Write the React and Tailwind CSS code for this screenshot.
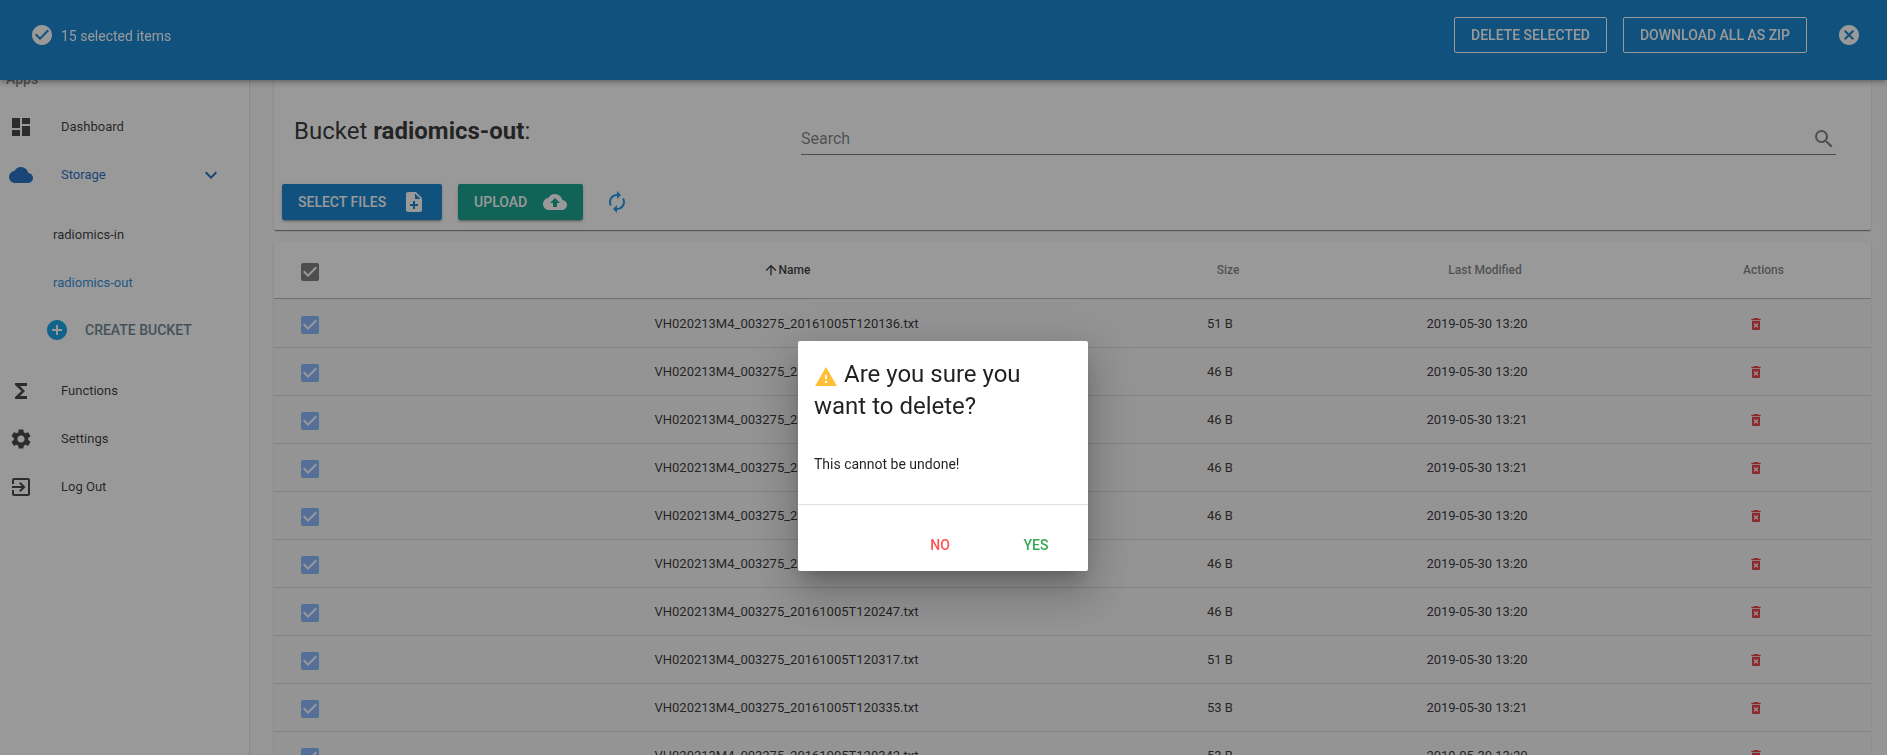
import React from "react";
import {
  MdAddCircle,
  MdArrowUpward,
  MdAutorenew,
  MdCancel,
  MdCheckCircle,
  MdCloud,
  MdCloudUpload,
  MdDashboard,
  MdExitToApp,
  MdExpandMore,
  MdFunctions,
  MdSearch,
  MdSettings,
} from "react-icons/md";

const files = [
  ["VH020213M4_003275_20161005T120136.txt", "51 B", "2019-05-30 13:20"],
  ["VH020213M4_003275_20161005T120148.txt", "46 B", "2019-05-30 13:20"],
  ["VH020213M4_003275_20161005T120159.txt", "46 B", "2019-05-30 13:21"],
  ["VH020213M4_003275_20161005T120211.txt", "46 B", "2019-05-30 13:21"],
  ["VH020213M4_003275_20161005T120223.txt", "46 B", "2019-05-30 13:20"],
  ["VH020213M4_003275_20161005T120235.txt", "46 B", "2019-05-30 13:20"],
  ["VH020213M4_003275_20161005T120247.txt", "46 B", "2019-05-30 13:20"],
  ["VH020213M4_003275_20161005T120317.txt", "51 B", "2019-05-30 13:20"],
  ["VH020213M4_003275_20161005T120335.txt", "53 B", "2019-05-30 13:21"],
  ["VH020213M4_003275_20161005T120342.txt", "53 B", "2019-05-30 13:20"],
];

function Glyph({ d, className }) {
  return (
    <svg viewBox="0 0 24 24" fill="currentColor" aria-hidden="true" className={className}>
      <path d={d} />
    </svg>
  );
}

const FILE_PLUS =
  "M13 9h5.5L13 3.5V9M6 2h8l6 6v12a2 2 0 0 1-2 2H6a2 2 0 0 1-2-2V4c0-1.11.89-2 2-2m5 9v3H8v2h3v3h2v-3h3v-2h-3v-3h-2Z";
const DELETE_FOREVER =
  "M6 19a2 2 0 0 0 2 2h8a2 2 0 0 0 2-2V7H6v12M8.46 11.88l1.41-1.41L12 12.59l2.12-2.12 1.41 1.41L13.41 14l2.12 2.12-1.41 1.41L12 15.41l-2.12 2.12-1.41-1.41L10.59 14l-2.13-2.12M15.5 4l-1-1h-5l-1 1H5v2h14V4h-3.5Z";
const ALERT = "M13 14h-2v-4h2m0 8h-2v-2h2M1 21h22L12 2 1 21Z";

function TickBox({ label, tone }) {
  return (
    <span className="grid size-[18px] place-items-center">
      <input
        type="checkbox"
        defaultChecked
        aria-label={label}
        className={`size-[18px] appearance-none rounded-xs [grid-area:1/1] ${tone}`}
      />
      <svg viewBox="0 0 18 18" fill="#fff" aria-hidden="true" className="pointer-events-none size-[18px] [grid-area:1/1]">
        <path d="M7 14L2 9l1.41-1.41L7 11.17l7.59-7.59L16 5 7 14Z" />
      </svg>
    </span>
  );
}

function NavItem({ icon, label, tone = "text-black/85", children }) {
  return (
    <a href="#" className={`flex h-12 items-center pr-[26px] pl-[9px] text-[13px] ${tone}`}>
      {icon}
      <span className="ml-7 flex-1">{label}</span>
      {children}
    </a>
  );
}

function HeaderCell({ children, active }) {
  return (
    <th className={`px-6 text-xs font-medium ${active ? "text-black/85" : "text-black/55"}`}>
      <span className="flex items-center justify-center">
        <MdArrowUpward className={active ? "size-4" : "invisible size-4"} />
        {children}
      </span>
    </th>
  );
}

function Sidebar() {
  return (
    <nav className="w-[250px] shrink-0 border-r border-black/12 bg-white pt-[55px]">
      <h2 className="flex h-12 items-center pl-1.5 text-sm font-medium text-black/55">Apps</h2>
      <NavItem icon={<MdDashboard className="size-6 text-[#37343a]" />} label="Dashboard" />
      <NavItem icon={<MdCloud className="size-6" />} label="Storage" tone="text-[#1565c0]">
        <MdExpandMore className="size-6" />
      </NavItem>
      <div className="flex flex-col pt-3 pb-3.5 text-[13px]">
        <a href="#" className="flex h-12 items-center pl-[53px] text-black/85">radiomics-in</a>
        <a href="#" className="flex h-12 items-center pl-[53px] text-[#1e88d8]">radiomics-out</a>
        <button className="flex h-[46px] items-center pl-[45px] text-sm font-medium text-[#607d8b]">
          <MdAddCircle className="mr-4 size-6 text-[#039be5]" />
          CREATE BUCKET
        </button>
      </div>
      <NavItem icon={<MdFunctions className="size-6 text-[#37343a]" />} label="Functions" />
      <NavItem icon={<MdSettings className="size-6 text-[#37343a]" />} label="Settings" />
      <NavItem icon={<MdExitToApp className="size-6 text-[#37343a]" />} label="Log Out" />
    </nav>
  );
}

function SelectionBar() {
  return (
    <header className="fixed inset-x-0 top-0 flex h-20 items-start bg-[#027bce] pr-[26px] pl-[30px] text-white shadow-[0_2px_4px_-1px_rgba(0,0,0,.2),0_4px_5px_rgba(0,0,0,.14),0_1px_10px_rgba(0,0,0,.12)]">
      <div className="flex flex-1 items-center pt-[23px] text-sm">
        <MdCheckCircle className="mr-[7px] size-6" />
        <span className="pt-0.5">15 selected items</span>
      </div>
      <div className="flex items-center gap-4 pt-[17px] text-sm font-medium">
        <button className="h-9 rounded-xs border border-white px-4">DELETE SELECTED</button>
        <button className="h-9 rounded-xs border border-white px-4">DOWNLOAD ALL AS ZIP</button>
        <button aria-label="Clear selection" className="ml-[14px]">
          <MdCancel className="size-6" />
        </button>
      </div>
    </header>
  );
}

function BucketCard() {
  const raised = "flex h-9 items-center rounded-xs px-4 shadow-[0_3px_1px_-2px_rgba(0,0,0,.2),0_2px_2px_rgba(0,0,0,.14),0_1px_5px_rgba(0,0,0,.12)]";
  return (
    <section className="rounded-xs bg-white px-2 pt-[115px] pb-2.5 shadow-[0_2px_1px_-1px_rgba(0,0,0,.4),0_1px_1px_rgba(0,0,0,.14),0_1px_3px_rgba(0,0,0,.12)]">
      <div className="flex items-start pr-[27px] pl-3">
        <h1 className="w-[507px] text-2xl leading-8">
          Bucket <strong className="font-bold">radiomics-out</strong>:
        </h1>
        <label className="mt-2 flex h-8 flex-1 items-center border-b border-black/55 text-black/55">
          <input
            type="text"
            placeholder="Search"
            aria-label="Search"
            className="min-w-0 flex-1 bg-transparent text-base outline-none placeholder:text-black/55"
          />
          <MdSearch className="size-6" />
        </label>
      </div>
      <div className="mt-[29px] flex items-center text-sm font-medium text-white">
        <button className={`${raised} bg-[#027bce]`}>
          SELECT FILES
          <Glyph d={FILE_PLUS} className="ml-4 size-6" />
        </button>
        <button className={`${raised} ml-4 bg-[#059a86]`}>
          UPLOAD
          <MdCloudUpload className="ml-4 size-6" />
        </button>
        <button aria-label="Refresh" className="ml-[22px]">
          <MdAutorenew className="size-6 text-[#0d93df]" />
        </button>
      </div>
    </section>
  );
}

function FileTable() {
  return (
    <section className="mt-3 rounded-xs bg-white shadow-[0_2px_1px_-1px_rgba(0,0,0,.2),0_1px_1px_rgba(0,0,0,.14),0_1px_3px_rgba(0,0,0,.12)]">
      <table className="w-full table-fixed border-collapse text-center text-[13px]">
        <colgroup>
          <col className="w-[173px]" />
          <col className="w-[679px]" />
          <col className="w-[188px]" />
          <col className="w-[326px]" />
          <col className="w-[231px]" />
        </colgroup>
        <thead>
          <tr className="h-14 border-b border-black/25">
            <th className="pt-1 pl-[27px]">
              <TickBox label="Select all files" tone="bg-[#757575]" />
            </th>
            <HeaderCell active>Name</HeaderCell>
            <HeaderCell>Size</HeaderCell>
            <HeaderCell>Last Modified</HeaderCell>
            <HeaderCell>Actions</HeaderCell>
          </tr>
        </thead>
        <tbody>
          {files.map(([name, size, modified]) => (
            <tr key={name} className="h-12 border-b border-black/12 bg-[#f5f5f5] first:h-[49px]">
              <td className="pt-1 pl-[27px]">
                <TickBox label={`Select ${name}`} tone="bg-[#82b1ff]" />
              </td>
              <td className="pt-0.5">{name}</td>
              <td className="pt-0.5">{size}</td>
              <td className="pt-0.5">{modified}</td>
              <td className="pt-0.5">
                <button aria-label={`Delete ${name}`} className="mx-auto block">
                  <Glyph d={DELETE_FOREVER} className="size-4 text-[#e5303a]" />
                </button>
              </td>
            </tr>
          ))}
        </tbody>
      </table>
    </section>
  );
}

function ConfirmDialog() {
  return (
    <div className="fixed inset-0 flex items-start justify-center bg-[#212121]/46 pt-[341px] pr-px">
      <div
        role="dialog"
        aria-modal="true"
        aria-labelledby="confirm-title"
        className="w-[290px] rounded-xs bg-white shadow-[0_11px_15px_-7px_rgba(0,0,0,.2),0_24px_38px_3px_rgba(0,0,0,.14),0_9px_46px_8px_rgba(0,0,0,.12)]"
      >
        <h2 id="confirm-title" className="px-4 pt-[17px] pb-4 text-2xl leading-8">
          <Glyph d={ALERT} className="mr-1.5 inline-block size-6 align-[-7px] text-[#ffc038]" />
          Are you sure you want to delete?
        </h2>
        <p className="px-4 pt-4 pb-[30px] text-sm leading-5">This cannot be undone!</p>
        <div className="flex justify-end gap-2 border-t border-black/12 px-2 pt-[22px] pb-2 text-sm font-medium">
          <button className="h-9 w-22 text-[#ff5252]">NO</button>
          <button className="h-9 w-22 text-[#34a853]">YES</button>
        </div>
      </div>
    </div>
  );
}

export default function App() {
  return (
    <div className="h-screen overflow-hidden bg-[#fafafa] font-[Roboto,sans-serif] text-black/87">
      <div className="flex min-h-full">
        <Sidebar />
        <main className="min-w-0 flex-1 pr-4 pl-6">
          <BucketCard />
          <FileTable />
        </main>
      </div>
      <SelectionBar />
      <ConfirmDialog />
    </div>
  );
}
